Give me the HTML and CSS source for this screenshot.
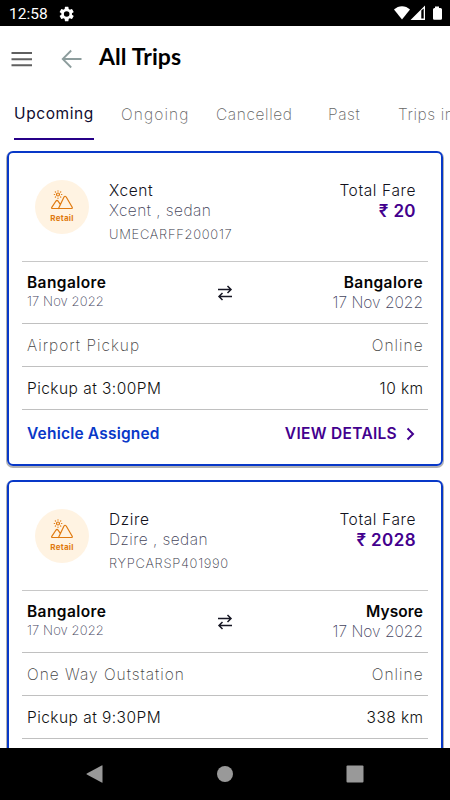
FILE: index.html
```html
<!DOCTYPE html>
<html lang="en">
  <head>
    <meta charset="UTF-8" />
    <meta name="viewport" content="width=device-width, initial-scale=1.0" />
    <title>All Trips</title>
    <link rel="stylesheet" href="styles.css">
  </head>
  <body>
    <div class="status-bar">
      <span class="clock">12:58</span>
      <svg class="gear" width="16" height="16" viewBox="0 0 24 24"><path fill="#fff" fill-rule="evenodd" d="M19.4 13a7.500 7.500 0 0 0 0-2l2.400-1.800a.6.6 0 0 0 .1-.7l-2.200-3.800a.6.6 0 0 0-.7-.3l-2.700 1.100a8 8 0 0 0-1.800-1L14.100 1.500a.6.6 0 0 0-.6-.5h-4a.6.6 0 0 0-.6.5l-.4 3a8 8 0 0 0-1.800 1L4 4.400a.6.6 0 0 0-.7.3L1.100 8.500a.6.6 0 0 0 .1.700L3.600 11a7.500 7.500 0 0 0 0 2l-2.400 1.800a.6.6 0 0 0-.1.700l2.200 3.800c.1.300.4.400.7.300l2.700-1.100a8 8 0 0 0 1.800 1l.4 3c0 .3.300.5.600.5h4c.3 0 .6-.2.6-.5l.4-3a8 8 0 0 0 1.800-1l2.700 1.100c.3.100.6 0 .7-.3l2.200-3.800a.6.6 0 0 0-.1-.7zM11.500 7.800a4.200 4.200 0 1 1 0 8.400 4.200 4.200 0 0 1 0-8.400z"/></svg>
      <svg class="signals" width="50" height="16" viewBox="0 0 50 16">
        <path fill="#fff" d="M0 4.500C4.500 0 11.500 0 16 4.500L8 14.500z"/>
        <path fill="#fff" fill-rule="evenodd" d="M31 .5V15H16.500zM27.300 5.500v8H29.700V3.500z"/>
        <path fill="#fff" d="M41 1.500h4V3h1.500q1.500 0 1.500 1.500V13.500q0 1.300-1.300 1.300h-6.400Q39 14.800 39 13.500V4.500Q39 3 40.500 3H41z"/>
      </svg>
    </div>

    <header class="header">
      <svg class="menu-icon" width="22" height="16" viewBox="0 0 22 16"><path d="M.5 2h20.500M.5 8.200h20.500M.5 14.300h20.500" stroke="#606060" stroke-width="2"/></svg>
      <svg class="back-icon" width="22" height="20" viewBox="0 0 22 20"><path d="M20.500 10H1.500M10.200 1.500L1.700 10l8.500 8.500" fill="none" stroke="#8d9d9d" stroke-width="1.800"/></svg>
      <h1>All Trips</h1>
    </header>

    <nav class="tabs">
      <a class="tab active">Upcoming</a>
      <a class="tab ongoing">Ongoing</a>
      <a class="tab cancelled">Cancelled</a>
      <a class="tab past">Past</a>
      <a class="tab">Trips in</a>
    </nav>

    <main class="trips">
      <section class="card">
        <div class="card-head">
          <div class="badge">
            <svg width="24" height="22" viewBox="0 0 24 22" fill="none" stroke="#e07a10" stroke-width="1.200" stroke-linecap="round" stroke-linejoin="round">
              <path d="M8.500 18.500L14 7q1-1.500 2.200 0l6 10.300q.5 1.200-.8 1.200H2.500q-1.300 0-.7-1.200L6 11q1-1 2 0l2.300 3.300"/>
              <circle cx="8" cy="4.500" r="1.500"/>
              <path d="M8 .8v.3M8 8v.3M4.300 4.500h.3M11.500 4.500h.3M5.300 1.800l.2.200M10.600 7l.2.200M10.800 1.800l-.2.200M5.300 7.200l.2-.2"/>
            </svg>
            <span>Retail</span>
          </div>
          <div class="vehicle">
            <p class="model">Xcent</p>
            <p class="type">Xcent , sedan</p>
            <p class="code">UMECARFF200017</p>
          </div>
          <div class="fare">
            <p class="fare-label">Total Fare</p>
            <p class="amount">₹ 20</p>
          </div>
        </div>
        <div class="route">
          <div class="from">
            <p class="city">Bangalore</p>
            <p class="date">17 Nov 2022</p>
          </div>
          <svg class="swap" width="16" height="16" viewBox="0 0 16 16" fill="none" stroke="#171724" stroke-width="1.500"><path d="M1 4.500h13M10.500 1l3.500 3.500L10.500 8M15 11.500H2M5.500 8L2 11.500 5.500 15"/></svg>
          <div class="to">
            <p class="city">Bangalore</p>
            <p class="date">17 Nov 2022</p>
          </div>
        </div>
        <div class="row light"><span>Airport Pickup</span><span>Online</span></div>
        <div class="row"><span>Pickup at 3:00PM</span><span>10 km</span></div>
        <div class="card-foot">
          <span class="assigned">Vehicle Assigned</span>
          <a class="details">VIEW DETAILS
            <svg width="9" height="14" viewBox="0 0 9 14"><path d="M1.500 1.500L7 7l-5.500 5.500" fill="none" stroke="#43008e" stroke-width="2"/></svg>
          </a>
        </div>
      </section>

      <section class="card">
        <div class="card-head">
          <div class="badge">
            <svg width="24" height="22" viewBox="0 0 24 22" fill="none" stroke="#e07a10" stroke-width="1.200" stroke-linecap="round" stroke-linejoin="round">
              <path d="M8.500 18.500L14 7q1-1.500 2.200 0l6 10.300q.5 1.200-.8 1.200H2.500q-1.300 0-.7-1.200L6 11q1-1 2 0l2.300 3.300"/>
              <circle cx="8" cy="4.500" r="1.500"/>
              <path d="M8 .8v.3M8 8v.3M4.300 4.500h.3M11.500 4.500h.3M5.300 1.800l.2.200M10.600 7l.2.200M10.800 1.800l-.2.200M5.300 7.200l.2-.2"/>
            </svg>
            <span>Retail</span>
          </div>
          <div class="vehicle">
            <p class="model">Dzire</p>
            <p class="type">Dzire , sedan</p>
            <p class="code">RYPCARSP401990</p>
          </div>
          <div class="fare">
            <p class="fare-label">Total Fare</p>
            <p class="amount">₹ 2028</p>
          </div>
        </div>
        <div class="route">
          <div class="from">
            <p class="city">Bangalore</p>
            <p class="date">17 Nov 2022</p>
          </div>
          <svg class="swap" width="16" height="16" viewBox="0 0 16 16" fill="none" stroke="#171724" stroke-width="1.500"><path d="M1 4.500h13M10.500 1l3.500 3.500L10.500 8M15 11.500H2M5.500 8L2 11.500 5.500 15"/></svg>
          <div class="to">
            <p class="city mysore">Mysore</p>
            <p class="date">17 Nov 2022</p>
          </div>
        </div>
        <div class="row light"><span>One Way Outstation</span><span>Online</span></div>
        <div class="row"><span>Pickup at 9:30PM</span><span>338 km</span></div>
      </section>
    </main>

    <div class="nav-bar">
      <svg width="18" height="18" viewBox="0 0 18 18"><path d="M16.500.8v16.400q0 .8-.8.400L.8 9.500q-.8-.5 0-1L15.700.4q.8-.4.800.4z" fill="#999"/></svg>
      <svg width="18" height="18" viewBox="0 0 18 18"><circle cx="9" cy="9" r="8" fill="#999"/></svg>
      <svg width="18" height="18" viewBox="0 0 18 18"><rect x=".5" y=".5" width="17" height="17" rx="1" fill="#999"/></svg>
    </div>
  </body>
</html>
```
FILE: styles.css
```css
* {
  box-sizing: border-box;
}

body {
  margin: 0;
  height: 800px;
  display: flex;
  flex-direction: column;
  overflow: hidden;
  background-color: #fff;
  font-family: Inter, "Noto Sans", sans-serif;
  font-size: 15.5px;
  color: #111;
}

p,
h1 {
  margin: 0;
}

svg {
  display: block;
  flex: none;
}

.status-bar {
  flex: none;
  height: 26px;
  display: flex;
  align-items: center;
  padding: 0 6px 0 9px;
  background-color: #000;
  color: #fff;
}

.clock {
  width: 50px;
  padding-top: 2px;
  font-family: Roboto, sans-serif;
  font-size: 15.5px;
}

.gear {
  margin-top: 1px;
}

.signals {
  margin-left: auto;
}

.header {
  flex: none;
  height: 65px;
  display: flex;
  align-items: center;
  padding-left: 11px;
}

.back-icon {
  margin-left: 28px;
}

h1 {
  margin-left: 16px;
  padding-bottom: 6px;
  font-family: Lato, sans-serif;
  font-size: 23px;
  font-weight: 700;
  letter-spacing: 0.1px;
  color: #000;
}

.tabs {
  flex: none;
  height: 60px;
  display: grid;
  grid-template-columns: 107px 95px 112px 70px 52px;
  align-items: start;
  padding-left: 14px;
  overflow: hidden;
}

.tab {
  height: 49px;
  padding-top: 12px;
  line-height: 24px;
  font-weight: 200;
  letter-spacing: 0.6px;
  color: #666;
  white-space: nowrap;
}

.tab.active {
  width: 80px;
  padding-top: 11px;
  border-bottom: 2px solid #260088;
  font-weight: 400;
  color: #100c30;
}

.tab.ongoing {
  letter-spacing: 1.1px;
}

.trips {
  flex: 1;
  min-height: 0;
  overflow: hidden;
  padding: 0 7px;
}

.card {
  height: 315px;
  margin-bottom: 14px;
  padding: 0 13px;
  border: 2px solid #0838c8;
  border-radius: 6px;
  box-shadow: 0 1px 0 1px rgba(0, 0, 0, 0.3);
}

.card-head {
  height: 109px;
  display: flex;
  padding: 27px 13px 0;
  border-bottom: 1px solid #c8c8c8;
}

.badge {
  width: 54px;
  height: 54px;
  display: flex;
  flex-direction: column;
  align-items: center;
  padding-top: 10px;
  border-radius: 50%;
  background-color: #fff3e2;
}

.badge span {
  margin-top: 1px;
  font-size: 8px;
  line-height: 10px;
  font-weight: 700;
  letter-spacing: 0.25px;
  color: #e07a10;
}

.vehicle {
  margin-left: 20px;
  padding-top: 1px;
}

.model,
.type,
.fare-label,
.amount {
  line-height: 20px;
}

.model,
.fare-label {
  font-weight: 300;
  letter-spacing: 0.6px;
  color: #12121c;
}

.type {
  font-weight: 200;
  letter-spacing: 0.45px;
  color: #44445a;
}

.code {
  margin-top: 3px;
  font-size: 13px;
  line-height: 20px;
  font-weight: 200;
  letter-spacing: 0.7px;
  color: #333344;
}

.fare {
  margin-left: auto;
  margin-right: -1px;
  padding-top: 1px;
  text-align: right;
}

.amount {
  font-size: 17px;
  font-weight: 600;
  letter-spacing: 0.4px;
  color: #43008e;
}

.route {
  height: 62px;
  display: grid;
  grid-template-columns: 1fr 16px 1fr;
  padding: 11px 5px 0;
  border-bottom: 1px solid #c0c0c0;
}

.swap {
  margin-top: 12px;
}

.to {
  text-align: right;
}

.city {
  line-height: 20px;
  font-weight: 600;
  letter-spacing: 0.4px;
  color: #050505;
}

.city.mysore {
  letter-spacing: 0.1px;
}

.date {
  line-height: 20px;
  font-weight: 200;
  color: #44445e;
}

.from .date {
  font-size: 13px;
  line-height: 17px;
  letter-spacing: 0.1px;
}

.row {
  height: 43px;
  display: flex;
  align-items: center;
  justify-content: space-between;
  padding: 0 5px;
  border-bottom: 1px solid #c0c0c0;
  font-weight: 350;
  letter-spacing: 0.45px;
}

.row.light {
  font-weight: 200;
  letter-spacing: 1px;
  color: #444;
}

.row span:last-child {
  margin-right: -0.6px;
}

.card-foot {
  height: 54px;
  display: flex;
  align-items: center;
  justify-content: space-between;
  padding: 0 13px 7px 5px;
  font-weight: 600;
  letter-spacing: 0.2px;
}

.assigned {
  color: #0838c8;
}

.details {
  display: flex;
  align-items: center;
  gap: 9px;
  letter-spacing: 0.3px;
  color: #43008e;
}

.nav-bar {
  flex: none;
  height: 52px;
  display: flex;
  align-items: center;
  justify-content: center;
  gap: 112px;
  background-color: #000;
}
```
